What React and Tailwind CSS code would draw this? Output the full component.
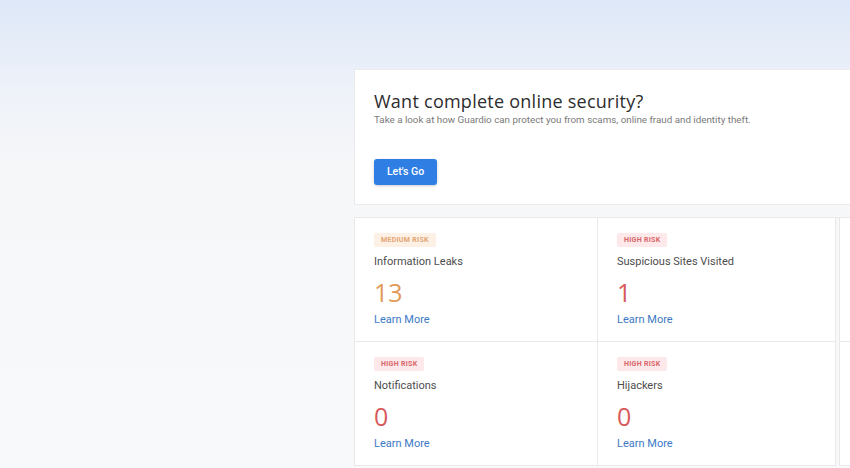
import React from "react";

const cards = [
  { risk: "MEDIUM RISK", title: "Information Leaks", value: "13", medium: true },
  { risk: "HIGH RISK", title: "Suspicious Sites Visited", value: "1" },
  { risk: "HIGH RISK", title: "", value: "" },
  { risk: "HIGH RISK", title: "Notifications", value: "0" },
  { risk: "HIGH RISK", title: "Hijackers", value: "0" },
  { risk: "HIGH RISK", title: "", value: "" },
];

function Card({ c, col }) {
  const border =
    col === 0
      ? "border-l border-r border-b border-[#e9e9e9] pl-[19px]"
      : col === 1
      ? "border-r border-b border-[#e9e9e9] pl-[19px]"
      : "border-l border-b border-[#e9e9e9] ml-[3px] pl-[19px]";
  return (
    <div className={`bg-white h-[124px] pt-[15px] flex flex-col items-start ${border}`}>
      {c.title && (
        <>
          <div
            className={`flex items-center h-[14px] px-[7px] rounded-[2px] text-[7px] leading-[14px] font-bold tracking-[0.3px] ${
              c.medium ? "bg-[#fdf1e6] text-[#e3a473]" : "bg-[#fde9e9] text-[#d9666a]"
            }`}
          >
            {c.risk}
          </div>
          <div className="mt-[8px] text-[11px] leading-[14px] text-[#4d4d4d]">{c.title}</div>
          <div
            className={`mt-[8px] text-[25px] leading-[30px] font-['Open_Sans',sans-serif] ${
              c.medium ? "text-[#e39a58]" : "text-[#d8595b]"
            }`}
          >
            {c.value}
          </div>
          <div className="mt-[6px] text-[11px] leading-[14px] text-[#3d79c4]">Learn More</div>
        </>
      )}
    </div>
  );
}

export default function App() {
  return (
    <div className="w-[850px] h-[468px] overflow-hidden bg-[linear-gradient(180deg,#dee8f8_0px,#eef2f9_90px,#f6f7f9_170px,#f8f9fa_468px)] font-['Roboto',sans-serif]">
      <div className="pl-[354px] pt-[69px]">
        <div className="bg-white border border-[#ebebeb] border-r-0 h-[136px] pl-[19px] pt-[19px]">
          <div className="text-[18px] leading-[24px] text-[#2d2d2d] font-['Open_Sans',sans-serif] tracking-[0.25px]">
            Want complete online security?
          </div>
          <div className="text-[9.8px] leading-[13px] text-[#7a7a7a]">
            Take a look at how Guardio can protect you from scams, online fraud and identity theft.
          </div>
          <button className="mt-[33px] w-[63px] h-[26px] rounded-[3px] bg-[#2f7ee3] text-white text-[10.5px] font-medium shadow-[0_1px_3px_rgba(0,0,0,0.2)]">
            Let's Go
          </button>
        </div>
        <div className="mt-[12px] border-t border-[#e9e9e9] grid grid-cols-[244px_238px_1fr]">
          {cards.map((c, i) => (
            <Card key={i} c={c} col={i % 3} />
          ))}
        </div>
      </div>
    </div>
  );
}
